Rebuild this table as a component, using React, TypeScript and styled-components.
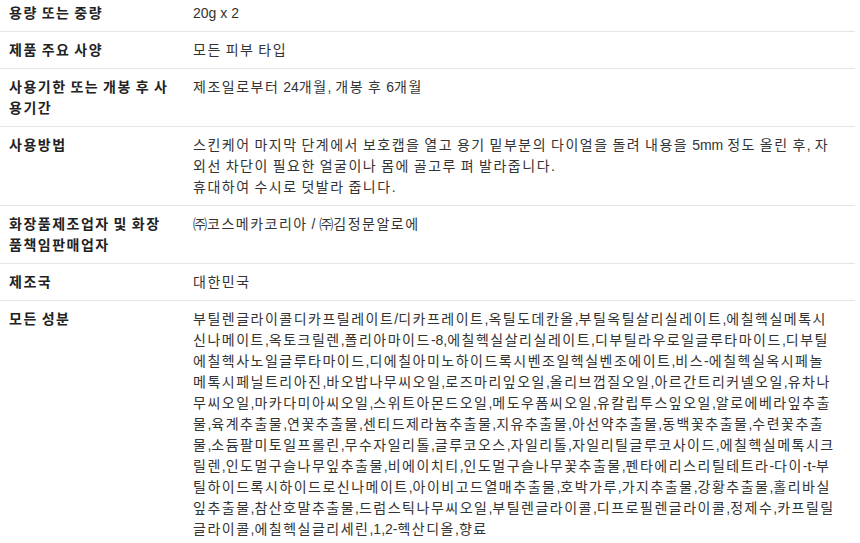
import React from 'react'
import styled, { createGlobalStyle } from 'styled-components'

const GlobalStyle = createGlobalStyle`
  html, body {
    margin: 0;
    padding: 0;
    background: #fff;
  }
  body {
    font-family: 'Liberation Sans', 'Noto Sans CJK KR', sans-serif;
    font-size: 14px;
    color: #333;
  }
`

const SpecList = styled.dl`
  width: 855px;
  margin: -5px 0 0 0;
  padding: 0;
`

const SpecRow = styled.div`
  display: grid;
  grid-template-columns: 184px 1fr;
  border-bottom: 1px solid #e5e5e5;
  padding: 8px 0 7px;
  line-height: 21px;
`

const Label = styled.dt`
  margin: 0;
  padding: 0 11px 0 9px;
  font-weight: bold;
  color: #222;
`

const Value = styled.dd`
  margin: 0;
  padding: 0 19px 0 9px;
  color: #333;
  word-break: break-all;
`

// hangul glyphs in the fallback font run narrower than the original, so widen them a bit
const Hangul = styled.span`
  letter-spacing: 1.5px;
`

const HANGUL_RUN = /([\uAC00-\uD7A3\u3130-\u318F]+)/

const KoText = ({ text }: { text: string }) => (
  <>
    {text.split('\n').map((line, i) => (
      <React.Fragment key={i}>
        {i > 0 && <br />}
        {line.split(HANGUL_RUN).map((part, j) =>
          j % 2 === 1 ? <Hangul key={j}>{part}</Hangul> : part
        )}
      </React.Fragment>
    ))}
  </>
)

type Spec = {
  label: string
  value: string
}

const specs: Spec[] = [
  { label: '용량 또는 중량', value: '20g x 2' },
  { label: '제품 주요 사양', value: '모든 피부 타입' },
  { label: '사용기한 또는 개봉 후 사용기간', value: '제조일로부터 24개월, 개봉 후 6개월' },
  {
    label: '사용방법',
    value:
      '스킨케어 마지막 단계에서 보호캡을 열고 용기 밑부분의 다이얼을 돌려 내용을 5mm 정도 올린 후, 자외선 차단이 필요한 얼굴이나 몸에 골고루 펴 발라줍니다.\n휴대하여 수시로 덧발라 줍니다.',
  },
  { label: '화장품제조업자 및 화장품책임판매업자', value: '㈜코스메카코리아 / ㈜김정문알로에' },
  { label: '제조국', value: '대한민국' },
  {
    label: '모든 성분',
    value:
      '부틸렌글라이콜디카프릴레이트/디카프레이트,옥틸도데칸올,부틸옥틸살리실레이트,에칠헥실메톡시신나메이트,옥토크릴렌,폴리아마이드-8,에칠헥실살리실레이트,디부틸라우로일글루타마이드,디부틸에칠헥사노일글루타마이드,디에칠아미노하이드록시벤조일헥실벤조에이트,비스-에칠헥실옥시페놀메톡시페닐트리아진,바오밥나무씨오일,로즈마리잎오일,올리브껍질오일,아르간트리커넬오일,유차나무씨오일,마카다미아씨오일,스위트아몬드오일,메도우폼씨오일,유칼립투스잎오일,알로에베라잎추출물,육계추출물,연꽃추출물,센티드제라늄추출물,지유추출물,아선약추출물,동백꽃추출물,수련꽃추출물,소듐팔미토일프롤린,무수자일리톨,글루코오스,자일리톨,자일리틸글루코사이드,에칠헥실메톡시크릴렌,인도멀구슬나무잎추출물,비에이치티,인도멀구슬나무꽃추출물,펜타에리스리틸테트라-다이-t-부틸하이드록시하이드로신나메이트,아이비고드열매추출물,호박가루,가지추출물,강황추출물,홀리바실잎추출물,참산호말추출물,드럼스틱나무씨오일,부틸렌글라이콜,디프로필렌글라이콜,정제수,카프릴릴글라이콜,에칠헥실글리세린,1,2-헥산디올,향료',
  },
]

export default function App() {
  return (
    <>
      <GlobalStyle />
      <SpecList>
        {specs.map((spec) => (
          <SpecRow key={spec.label}>
            <Label>
              <KoText text={spec.label} />
            </Label>
            <Value>
              <KoText text={spec.value} />
            </Value>
          </SpecRow>
        ))}
      </SpecList>
    </>
  )
}
